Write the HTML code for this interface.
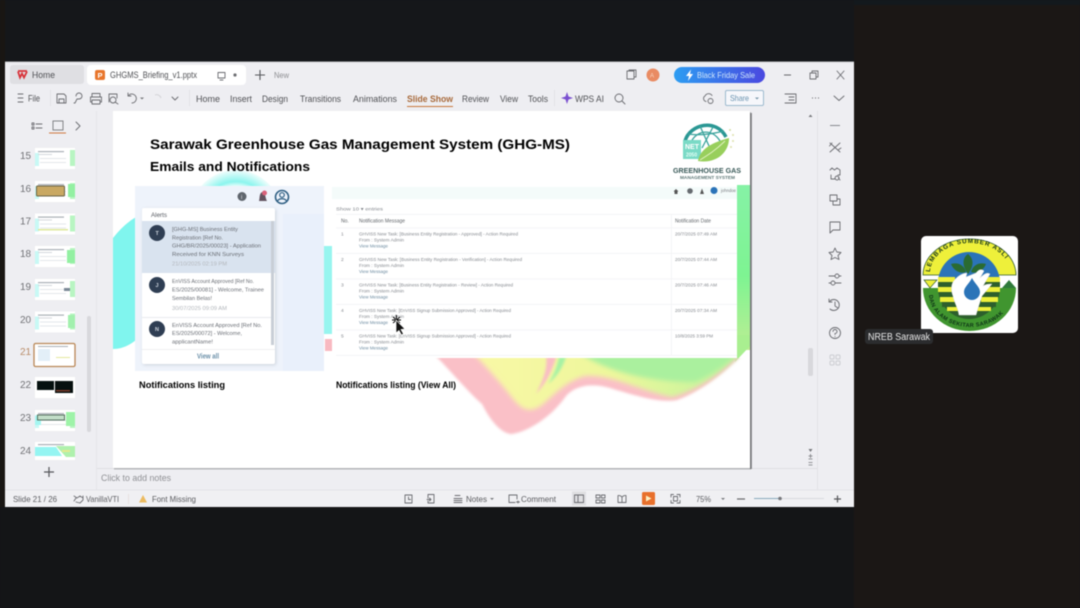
<!DOCTYPE html>
<html lang="en"><head><meta charset="utf-8"><title>GHGMS Briefing</title>
<style>
html,body{margin:0;padding:0;background:#15171a;width:1080px;height:608px;overflow:hidden}
svg{display:block;filter:blur(.45px)}
text{font-family:"Liberation Sans",sans-serif}
.m{font-size:9px;fill:#505155}
.s{font-size:8.5px;fill:#5c5d61}
.i{fill:none;stroke:#6a6b70;stroke-width:.9;stroke-linecap:round;stroke-linejoin:round}
.n{font-size:10px;fill:#707175}
.a{font-size:5.7px;fill:#6b6f76}
.d{font-size:5.4px;fill:#b3b7bc}
.t{font-size:4.9px;fill:#85898f}
.l{font-size:4.9px;fill:#6c8ba0}
.b{font-weight:bold;fill:#000}
</style></head><body>
<svg width="1080" height="608" viewBox="0 0 1080 608" xmlns="http://www.w3.org/2000/svg">
<defs>
<linearGradient id="gr" x1="0" x2="0" y1="0" y2="1"><stop offset="0" stop-color="#86f2a6"/><stop offset=".55" stop-color="#7ef492"/><stop offset="1" stop-color="#bdee94"/></linearGradient>
<linearGradient id="bt" x1="0" x2="1"><stop offset="0" stop-color="#2d9df2"/><stop offset="1" stop-color="#4a48e0"/></linearGradient>
<linearGradient id="wv" x1="0" x2="1"><stop offset="0" stop-color="#f9f8a6"/><stop offset=".5" stop-color="#eef79c"/><stop offset="1" stop-color="#bcf39c"/></linearGradient>
<radialGradient id="hal"><stop offset="0" stop-color="#fff"/><stop offset=".62" stop-color="#fff"/><stop offset=".75" stop-color="#8cf5ee"/><stop offset="1" stop-color="#f0fdfc"/></radialGradient>
<filter id="bl"><feGaussianBlur stdDeviation="2.500"/></filter>
<filter id="bm"><feGaussianBlur stdDeviation="1.200"/></filter>
<filter id="sh" x="-10%" y="-10%" width="120%" height="120%"><feGaussianBlur stdDeviation="1.600"/></filter>
<clipPath id="wc"><rect x="113" y="358" width="637" height="110"/></clipPath>
<path id="arcT" d="M9,37 A40,30 0 0 1 89,37"/>
<path id="arcB" d="M8,58 A41,33 0 0 0 90,58"/>
<g id="th">
<rect width="40" height="21" fill="#fff"/>
<rect x="0" y="5" width="4" height="13" fill="#c8f9f5"/>
<rect x="35" y="2" width="5" height="16" fill="#b8f5c2"/>
<rect x="3" y="3" width="26" height="1.200" fill="#aab0b6"/>
<rect x="3" y="6" width="14" height="1" fill="#d4d8dc"/>
<rect x="5" y="10" width="26" height="1" fill="#e4e7ea"/>
<rect x="5" y="14" width="26" height="1" fill="#e4e7ea"/>
</g>
</defs>

<rect width="1080" height="608" fill="#15171a"/>
<rect x="854" y="5" width="226" height="603" fill="#1b1715"/>
<rect x="854" y="0" width="226" height="5" fill="#13191d"/>
<rect x="0" y="0" width="5" height="608" fill="#191613"/>
<rect y="507" width="854" height="101" fill="#141517"/>

<!-- window -->
<rect x="5" y="62" width="849" height="445" fill="#eeeef2"/>
<rect x="5" y="61.500" width="849" height="1" fill="#c9cacd"/>
<rect x="5" y="490" width="849" height="17" fill="#f0f0f3"/>
<rect x="96" y="111" width="1" height="379" fill="#e6e6ea"/>
<rect x="817" y="111" width="1" height="379" fill="#e2e2e6"/>
<rect x="97" y="468" width="720" height="1" fill="#dedee2"/>
<rect x="5" y="489.500" width="849" height="1" fill="#e3e3e7"/>

<!-- tabs -->
<rect x="10" y="65" width="74" height="19" rx="3" fill="#dfdfe3"/>
<rect x="87" y="65" width="159" height="20" rx="4" fill="#fff"/>
<path d="M18,71.500 L20,77.500 L22,73.500 L24,77.500 L27,71.500 M18,71 H27" fill="none" stroke="#d8333a" stroke-width="1.800"/>
<text x="32" y="78" class="m" textLength="23" lengthAdjust="spacingAndGlyphs">Home</text>
<rect x="95" y="70" width="10" height="10" rx="2" fill="#e8762c"/>
<text x="97.500" y="78" font-size="7.500" fill="#fff" font-weight="bold">P</text>
<text x="110" y="78" class="m" textLength="87" lengthAdjust="spacingAndGlyphs">GHGMS_Briefing_v1.pptx</text>
<path class="i" d="M218,72.500 H225 V78 H218 Z M220,80 H223"/>
<circle cx="235" cy="75" r="1.600" fill="#6d6e72"/>
<path d="M260,70 V80 M255,75 H265" stroke="#55565a" stroke-width="1.100"/>
<text x="274" y="78" font-size="8" fill="#8d8e92" textLength="15" lengthAdjust="spacingAndGlyphs">New</text>

<!-- top right -->
<path class="i" d="M627,71 H634 V79 H627 Z M629,71 V70 H636 V77 H634"/>
<circle cx="653" cy="75" r="6.500" fill="#e98b63"/>
<text x="650" y="77.500" font-size="6" fill="#f8d4c0">A</text>
<rect x="674" y="67" width="91" height="16" rx="8" fill="url(#bt)"/>
<path d="M691,69.500 L686,76 H689 L688,81 L693,74 H690 Z" fill="#fff"/>
<text x="697" y="78" font-size="8.500" fill="#cfe6fb" textLength="58" lengthAdjust="spacingAndGlyphs">Black Friday Sale</text>
<path d="M784,75 H791" stroke="#66676b" stroke-width="1"/>
<path class="i" d="M810,73 H816 V79 H810 Z M812,73 V71 H818 V77 H816"/>
<path class="i" d="M837,71 L844,79 M844,71 L837,79"/>

<!-- ribbon row -->
<path class="i" d="M18,94 H23 M18,98 H23 M18,102 H23"/>
<text x="28" y="101.500" class="m" textLength="12" lengthAdjust="spacingAndGlyphs">File</text>
<rect x="50" y="90" width="1" height="16" fill="#e2e2e6"/>
<path class="i" d="M57,94 H64 L66,96 V103 H57 Z M59,103 V99 H64 V103"/>
<path class="i" d="M76,96 A3,3 0 1 1 79,99 H77 L75,103 H74"/>
<path class="i" d="M92,97 V93.500 H100 V97 M92,102 H90.500 V97 H101.500 V102 H100 M92,100 H100 V104 H92 Z"/>
<path class="i" d="M109,102 V94 H117 V98 M113,103 A3,3 0 1 0 113,97 A3,3 0 1 0 113,103 M115,102 L118,104"/>
<path class="i" d="M129,95 A4.500,4.500 0 1 1 132,103 M128,93 V96 H131"/>
<path d="M140,97.500 L142,99.500 L144,97.500 Z" fill="#77787c"/>
<path d="M155,95 A4.500,4.500 0 0 1 161,98" fill="none" stroke="#d4d4d8"/>
<path class="i" d="M172,97 L175,100 L178,97"/>
<rect x="189" y="90" width="1" height="16" fill="#e2e2e6"/>
<text x="196" y="102" class="m" textLength="24" lengthAdjust="spacingAndGlyphs">Home</text>
<text x="230" y="102" class="m" textLength="22" lengthAdjust="spacingAndGlyphs">Insert</text>
<text x="262" y="102" class="m" textLength="26" lengthAdjust="spacingAndGlyphs">Design</text>
<text x="300" y="102" class="m" textLength="41" lengthAdjust="spacingAndGlyphs">Transitions</text>
<text x="353" y="102" class="m" textLength="44" lengthAdjust="spacingAndGlyphs">Animations</text>
<text x="407" y="102" font-size="9" font-weight="bold" fill="#a86a3c" textLength="46" lengthAdjust="spacingAndGlyphs">Slide Show</text>
<rect x="407" y="106" width="46" height="1" fill="#c9773c"/>
<text x="462" y="102" class="m" textLength="27" lengthAdjust="spacingAndGlyphs">Review</text>
<text x="500" y="102" class="m" textLength="18" lengthAdjust="spacingAndGlyphs">View</text>
<text x="528" y="102" class="m" textLength="20" lengthAdjust="spacingAndGlyphs">Tools</text>
<rect x="554" y="90" width="1" height="16" fill="#e2e2e6"/>
<path d="M567,92 L568.500,96.500 L573,98 L568.500,99.500 L567,104 L565.500,99.500 L561,98 L565.500,96.500 Z" fill="#7a4fd0"/>
<text x="575" y="102" class="m" textLength="29" lengthAdjust="spacingAndGlyphs">WPS AI</text>
<path class="i" d="M622,101 L625,104 M619,102 A4,4 0 1 0 619,94 A4,4 0 1 0 619,102"/>
<path class="i" d="M706,101.500 A3,3 0 0 1 705,96 A4,4 0 0 1 712,95.500 M708,101 A2.500,2.500 0 1 0 713,101 A2.500,2.500 0 1 0 708,101"/>
<rect x="725.500" y="90.500" width="38" height="15" rx="1.500" fill="#f6f7fb" stroke="#9dbace"/>
<text x="730" y="101" font-size="8.500" fill="#6a93b0" textLength="19" lengthAdjust="spacingAndGlyphs">Share</text>
<path d="M755,97.500 L757,99.500 L759,97.500 Z" fill="#7a97aa"/>
<path class="i" d="M787,94 H796 V103 H787 M785,94 H788 M785,103 H788 M789,97 H794 M789,100 H794"/>
<path d="M812,98 h1 m2,0 h1 m2,0 h1" stroke="#66676b" stroke-width="1"/>
<path class="i" d="M834,96 L839,100.500 L844,96" stroke="#8a8b90"/>

<!-- left panel head -->
<path class="i" d="M32,123 H34 V125 H32 Z M32,127 H34 V129 H32 Z M36,124 H42 M36,128 H42" stroke="#9a9ba0"/>
<rect x="53" y="121" width="10" height="9" fill="none" stroke="#77787c" stroke-width=".9"/>
<rect x="49" y="132.500" width="17" height="1" fill="#cf7a40"/>
<path class="i" d="M76,122 L80,126 L76,130"/>

<!-- thumbnails -->
<text x="20" y="159" class="n">15</text>
<text x="20" y="192" class="n">16</text>
<text x="20" y="224.500" class="n">17</text>
<text x="20" y="257" class="n">18</text>
<text x="20" y="290" class="n">19</text>
<text x="20" y="323" class="n">20</text>
<text x="20" y="355" font-size="10" fill="#b98c68">21</text>
<text x="20" y="388" class="n">22</text>
<text x="20" y="421" class="n">23</text>
<text x="20" y="454" class="n">24</text>
<use href="#th" x="35" y="148"/>
<use href="#th" x="35" y="181"/>
<rect x="36.500" y="186" width="28" height="10" rx="1" fill="#c9a862" stroke="#6a6446"/>
<rect x="68" y="184" width="7" height="13" fill="#93f0a2"/>
<use href="#th" x="35" y="213.500"/>
<rect x="38" y="229" width="30" height="1.500" fill="#dfe89c"/>
<use href="#th" x="35" y="246"/>
<rect x="67" y="250" width="8" height="13" fill="#93f0a2"/>
<use href="#th" x="35" y="279"/>
<rect x="64" y="288" width="6" height="3" fill="#7a8896"/>
<use href="#th" x="35" y="311.500"/>
<rect x="68" y="315" width="7" height="13" fill="#a2f0ae"/>
<rect x="34" y="343.500" width="41" height="23" rx="1.500" fill="#fff" stroke="#b98655" stroke-width="1.300"/>
<rect x="38" y="349" width="12" height="12" fill="#e3eff8"/>
<rect x="38" y="346" width="30" height="1" fill="#aab0b6"/>
<rect x="56" y="357" width="14" height="1" fill="#e4e89d"/>
<rect x="35" y="377" width="40" height="21" fill="#fff"/>
<rect x="37" y="381" width="17" height="9" fill="#05100f"/>
<rect x="55" y="381" width="18" height="12" fill="#07100f"/>
<rect x="56" y="390" width="14" height="1.500" fill="#7a3a2a"/>
<use href="#th" x="35" y="410"/>
<rect x="35" y="416" width="6" height="9" fill="#a4f6f1"/>
<rect x="37.500" y="415" width="27" height="5" fill="#c2dec8" stroke="#55705f"/>
<rect x="66" y="412" width="9" height="14" fill="#9ef3a8"/>
<rect x="35" y="442" width="40" height="18" fill="#fff"/>
<path d="M35,447 H56 L62,456 H35 Z" fill="#95f5f2"/>
<path d="M56,446 H75 V457 H66 Z" fill="#aff1ad"/>
<rect x="38" y="444" width="26" height="1.200" fill="#aab0b6"/>
<path d="M62,451 H70" stroke="#e6e98f" stroke-width="2"/>
<rect x="87" y="316" width="4" height="116" rx="2" fill="#d8d8dc"/>
<path d="M49,467 V477 M44,472 H54" stroke="#55565b" stroke-width="1.200"/>

<!-- slide shadow + slide -->
<rect x="114" y="112" width="637" height="357.500" fill="#b4b5b8"/>
<rect x="750" y="113" width="1.800" height="356" fill="#77787b"/>
<rect x="113" y="111" width="637" height="357" fill="#fff"/>

<!-- slide decoration -->
<circle cx="236" cy="216" r="46" fill="url(#hal)"/>
<path d="M113,238 Q124,224 136,217 L136,340 Q125,349 113,349 Z" fill="#80f5ee"/>
<rect x="324" y="246" width="9" height="88" fill="#97f5ef"/>
<rect x="325" y="339" width="8" height="12" fill="#f8b9c1"/>
<rect x="735" y="185" width="15" height="165" fill="url(#gr)"/>
<path d="M735,335 H750 V346 L735,362 Z" fill="#a9ef90"/>
<g clip-path="url(#wc)">
<path d="M430,350 C450,370 468,392 482,404 C492,424 503,434 512,434 C530,431 552,416 566,396 C576,385 592,383 610,388 C640,397 660,403 677,400 C700,392 730,370 750,345 V340 H430 Z" fill="#fac0c7" filter="url(#bm)"/>
<path d="M470,350 C488,368 503,386 514,400 C524,412 532,412 542,405 C554,395 566,381 585,376 C612,374 640,391 672,397 C700,390 730,367 750,343 V340 H470 Z" fill="url(#wv)" filter="url(#bl)"/>
<path d="M545,350 C549,366 544,378 536,394 C547,382 554,368 558,350 Z" fill="#f9bdc5" filter="url(#bm)"/>
<path d="M560,350 C558,366 554,374 548,384 C558,376 564,366 568,350 Z" fill="#a6f2a4" filter="url(#bm)"/>
<path d="M575,350 C605,372 650,382 695,382 C715,374 735,358 750,340 H575 Z" fill="#aaf09e" filter="url(#bl)"/>
</g>

<!-- title -->
<text x="150" y="149" font-size="14" class="b" textLength="420" lengthAdjust="spacingAndGlyphs">Sarawak Greenhouse Gas Management System (GHG-MS)</text>
<text x="150" y="171" font-size="13" class="b" textLength="160" lengthAdjust="spacingAndGlyphs">Emails and Notifications</text>

<!-- ghg logo -->
<path d="M685,141 C690,124 716,118 726,137" fill="none" stroke="#2a9794" stroke-width="3.500"/>
<path d="M691,142 C697,130 712,128 720,141 M700,126 L709,146 M713,127 L702,148 M688,134 C700,136 712,134 724,131" fill="none" stroke="#3aa39c" stroke-width="1.300"/>
<rect x="683" y="140" width="18" height="19" fill="#7adac6"/>
<text x="685" y="149" font-size="7" font-weight="bold" fill="#fff">NET</text>
<text x="686" y="156.500" font-size="5" font-weight="bold" fill="#e4fff6">2050</text>
<path d="M698,161 C700,148 714,142 729,138 C729,152 717,164 698,161 Z" fill="#98cf5c"/>
<path d="M700,160 C708,155 716,150 725,141" stroke="#e0f2c0" fill="none"/>
<circle cx="730" cy="130" r="1" fill="#d2dda2"/><circle cx="733" cy="135" r="1" fill="#dfe2ac"/><circle cx="733" cy="141" r="1" fill="#dfe2ac"/><circle cx="731" cy="147" r="1" fill="#dfe2ac"/>
<text x="673" y="173" font-size="7.500" font-weight="bold" fill="#3a5a59" textLength="68" lengthAdjust="spacingAndGlyphs">GREENHOUSE GAS</text>
<text x="680" y="179" font-size="4.500" font-weight="bold" fill="#5c7675" textLength="55" lengthAdjust="spacingAndGlyphs">MANAGEMENT SYSTEM</text>

<!-- alerts panel -->
<rect x="135" y="186" width="189" height="185" fill="#eef3fb"/>
<rect x="283" y="214" width="41" height="157" fill="#e9f0fb"/>
<circle cx="242" cy="196.500" r="4.500" fill="#5f656d"/>
<text x="241" y="199" font-size="6" fill="#dfe2e6">i</text>
<path d="M259,201 C260,198 259,193 262.500,192 C266,193 265,198 267,201 Z" fill="#62525f"/>
<circle cx="264.500" cy="193" r="2.500" fill="#d9607a"/>
<circle cx="282" cy="197" r="6.500" fill="#eef3fb" stroke="#2f5f83" stroke-width="1.600"/>
<circle cx="282" cy="195" r="2.300" fill="none" stroke="#2f5f83" stroke-width="1.200"/>
<path d="M277.500,201 C279,198 285,198 286.500,201" fill="none" stroke="#2f5f83" stroke-width="1.200"/>
<rect x="143" y="209" width="133" height="156" rx="2" fill="#aab2bb" opacity=".5" filter="url(#sh)"/>
<rect x="142" y="208" width="133" height="156" rx="2" fill="#fff"/>
<text x="151" y="217" font-size="6" fill="#565a61" textLength="16" lengthAdjust="spacingAndGlyphs">Alerts</text>
<rect x="142" y="221" width="133" height="52" fill="#d9e3ef"/>
<rect x="271" y="221" width="3" height="124" fill="#c8ced6"/>
<rect x="142" y="317" width="129" height="1" fill="#e8eaee"/>
<rect x="142" y="349" width="133" height="1" fill="#eff0f2"/>
<circle cx="157" cy="233" r="8" fill="#2f3e53"/>
<circle cx="157" cy="285" r="8" fill="#2f3e53"/>
<circle cx="157" cy="329" r="8" fill="#2f3e53"/>
<text x="155.500" y="235" font-size="5.500" font-weight="bold" fill="#cdd4dd">T</text>
<text x="155.500" y="287" font-size="5.500" font-weight="bold" fill="#cdd4dd">J</text>
<text x="155" y="331" font-size="5.500" font-weight="bold" fill="#cdd4dd">N</text>
<text x="172" y="231" class="a" textLength="66" lengthAdjust="spacingAndGlyphs">[GHG-MS] Business Entity</text>
<text x="172" y="239.500" class="a" textLength="51" lengthAdjust="spacingAndGlyphs">Registration [Ref No.</text>
<text x="172" y="247.500" class="a" textLength="89" lengthAdjust="spacingAndGlyphs">GHG/BR/2025/00023] - Application</text>
<text x="172" y="256" class="a" textLength="72" lengthAdjust="spacingAndGlyphs">Received for KNN Surveys</text>
<text x="172" y="265.500" class="d" textLength="55" lengthAdjust="spacingAndGlyphs">21/10/2025 02:19 PM</text>
<text x="172" y="283" class="a" textLength="82" lengthAdjust="spacingAndGlyphs">EnVISS Account Approved [Ref No.</text>
<text x="172" y="291.500" class="a" textLength="92" lengthAdjust="spacingAndGlyphs">ES/2025/00081] - Welcome, Trainee</text>
<text x="172" y="300" class="a" textLength="40" lengthAdjust="spacingAndGlyphs">Sembilan Belas!</text>
<text x="172" y="310" class="d" textLength="55" lengthAdjust="spacingAndGlyphs">30/07/2025 09:09 AM</text>
<text x="172" y="327" class="a" textLength="90" lengthAdjust="spacingAndGlyphs">EnVISS Account Approved [Ref No.</text>
<text x="172" y="335" class="a" textLength="70" lengthAdjust="spacingAndGlyphs">ES/2025/00072] - Welcome,</text>
<text x="172" y="343.500" class="a" textLength="41" lengthAdjust="spacingAndGlyphs">applicantName!</text>
<text x="197" y="358.500" font-size="7" font-weight="bold" fill="#6a8fa8" textLength="22" lengthAdjust="spacingAndGlyphs">View all</text>
<text x="139" y="388" font-size="9" class="b" textLength="86" lengthAdjust="spacingAndGlyphs">Notifications listing</text>

<!-- table panel -->
<rect x="332" y="185" width="405" height="173" fill="#fff"/>
<rect x="332" y="187" width="405" height="12" fill="#f4fbfa"/>
<path d="M676,189 L673.500,191.500 H674.500 V194 H677.500 V191.500 H678.500 Z" fill="#555"/>
<circle cx="690" cy="191" r="2.800" fill="#666b70"/>
<path d="M700,194 L702,188.500 L704,194 Z" fill="#555"/>
<circle cx="714" cy="190.500" r="3.500" fill="#2b73b8"/>
<text x="721" y="192" font-size="4.500" fill="#777a7f" textLength="15" lengthAdjust="spacingAndGlyphs">johndoe</text>
<text x="336" y="210.500" class="t" textLength="47" lengthAdjust="spacingAndGlyphs">Show  10  ▾  entries</text>
<g fill="#f0f1f3">
<rect x="336" y="214" width="401" height=".7"/><rect x="336" y="227.500" width="401" height=".7"/>
<rect x="336" y="253" width="401" height=".7"/><rect x="336" y="278.500" width="401" height=".7"/>
<rect x="336" y="304" width="401" height=".7"/><rect x="336" y="329.500" width="401" height=".7"/>
<rect x="336" y="355" width="401" height=".7"/>
<rect x="671" y="214" width=".7" height="141"/>
</g>
<text x="341" y="222.500" font-size="5" fill="#62666b">No.</text>
<text x="359" y="222.500" font-size="5" fill="#62666b" textLength="46" lengthAdjust="spacingAndGlyphs">Notification Message</text>
<text x="675" y="222.500" font-size="5" fill="#62666b" textLength="36" lengthAdjust="spacingAndGlyphs">Notification Date</text>

<text x="341" y="235.500" class="t">1</text>
<text x="359" y="235.500" class="t" textLength="159" lengthAdjust="spacingAndGlyphs">GHVISS New Task: [Business Entity Registration - Approved] - Action Required</text>
<text x="359" y="241.500" class="t" textLength="45" lengthAdjust="spacingAndGlyphs">From : System Admin</text>
<text x="359" y="247.500" class="l" textLength="29" lengthAdjust="spacingAndGlyphs">View Message</text>
<text x="675" y="235.500" class="t" textLength="42" lengthAdjust="spacingAndGlyphs">20/7/2025 07:49 AM</text>

<text x="341" y="261" class="t">2</text>
<text x="359" y="261" class="t" textLength="163" lengthAdjust="spacingAndGlyphs">GHVISS New Task: [Business Entity Registration - Verification] - Action Required</text>
<text x="359" y="267" class="t" textLength="45" lengthAdjust="spacingAndGlyphs">From : System Admin</text>
<text x="359" y="273" class="l" textLength="29" lengthAdjust="spacingAndGlyphs">View Message</text>
<text x="675" y="261" class="t" textLength="42" lengthAdjust="spacingAndGlyphs">20/7/2025 07:44 AM</text>

<text x="341" y="286.500" class="t">3</text>
<text x="359" y="286.500" class="t" textLength="154" lengthAdjust="spacingAndGlyphs">GHVISS New Task: [Business Entity Registration - Review] - Action Required</text>
<text x="359" y="292.500" class="t" textLength="45" lengthAdjust="spacingAndGlyphs">From : System Admin</text>
<text x="359" y="298.500" class="l" textLength="29" lengthAdjust="spacingAndGlyphs">View Message</text>
<text x="675" y="286.500" class="t" textLength="42" lengthAdjust="spacingAndGlyphs">20/7/2025 07:46 AM</text>

<text x="341" y="312" class="t">4</text>
<text x="359" y="312" class="t" textLength="152" lengthAdjust="spacingAndGlyphs">GHVISS New Task: [EnVISS Signup Submission Approved] - Action Required</text>
<text x="359" y="318" class="t" textLength="45" lengthAdjust="spacingAndGlyphs">From : System Admin</text>
<text x="359" y="324" class="l" textLength="29" lengthAdjust="spacingAndGlyphs">View Message</text>
<text x="675" y="312" class="t" textLength="42" lengthAdjust="spacingAndGlyphs">20/7/2025 07:34 AM</text>

<text x="341" y="337.500" class="t">5</text>
<text x="359" y="337.500" class="t" textLength="152" lengthAdjust="spacingAndGlyphs">GHVISS New Task: [EnVISS Signup Submission Approved] - Action Required</text>
<text x="359" y="343.500" class="t" textLength="45" lengthAdjust="spacingAndGlyphs">From : System Admin</text>
<text x="359" y="349.500" class="l" textLength="29" lengthAdjust="spacingAndGlyphs">View Message</text>
<text x="675" y="337.500" class="t" textLength="38" lengthAdjust="spacingAndGlyphs">10/8/2025 3:59 PM</text>

<text x="336" y="388" font-size="9" class="b" textLength="120" lengthAdjust="spacingAndGlyphs">Notifications listing (View All)</text>

<!-- cursor -->
<path d="M396.500,315 V325 M392,320 H401 M393,317 L400,323 M400,317 L393,323" stroke="#000" stroke-width=".9"/>
<path d="M396,320 V333 L399,330.500 L401.500,335 L403.500,334 L401,329.500 L405,329 Z" fill="#111" stroke="#fff" stroke-width=".7"/>

<!-- gutter scrollbar -->
<path d="M808.500,117 L810.500,114.500 L812.500,117 Z" fill="#77787c"/>
<rect x="808" y="348" width="5" height="28" rx="2" fill="#d8d8dc"/>
<path d="M808.500,449 H812.500 L810.500,452 Z" fill="#77787c"/>
<path d="M808.500,456 H812.500 M808.500,459 H812.500 M810.500,454 V458" stroke="#77787c" stroke-width=".8"/>
<path d="M808.500,462.500 H812.500 M808.500,465 H812.500" stroke="#77787c" stroke-width=".8"/>

<!-- right rail -->
<path d="M830,125.500 H840" stroke="#88898e" stroke-width="1"/>
<path class="i" d="M830,143 L840,152 M840,143 L830,152 M829.500,146 L832,143 M838,150 L841,148"/>
<path class="i" d="M830,170 L832,168 L834.500,170 L837,168 L840,170 V175 H838 M831,175 V179 H835 M837,176 A2,2 0 1 0 837.100,176 M838.500,178 L840,180"/>
<path class="i" d="M830,195 H837 V201 H830 Z M833,201 V205 H840 V199 H837"/>
<path class="i" d="M830,222 H840 V230 H833 L830,233 Z"/>
<path class="i" d="M835,248 L836.800,252 L841,252.500 L838,255.500 L839,259.500 L835,257.500 L831,259.500 L832,255.500 L829,252.500 L833.200,252 Z"/>
<path class="i" d="M829,276 H835 M839,276 H841 M829,283 H831 M835,283 H841 M835,276 A2,2 0 1 0 839,276 A2,2 0 1 0 835,276 M831,283 A2,2 0 1 0 835,283 A2,2 0 1 0 831,283"/>
<path class="i" d="M830,301 A5.500,5.500 0 1 1 830,309 M829,299 V302 H832 M835,302 V306 L838,308"/>
<circle class="i" cx="835" cy="333" r="5.500"/>
<path class="i" d="M833,331.500 A2,2 0 1 1 835,333.500 V334.500 M835,336.500 V336.600"/>
<g fill="none" stroke="#cccdd2"><rect x="830" y="355" width="4" height="4" rx="1"/><rect x="836" y="355" width="4" height="4" rx="1"/><rect x="830" y="361" width="4" height="4" rx="1"/><rect x="836" y="361" width="4" height="4" rx="1"/></g>

<!-- notes -->
<text x="101" y="481" font-size="9" fill="#909195" textLength="70" lengthAdjust="spacingAndGlyphs">Click to add notes</text>

<!-- status bar -->
<text x="13" y="502" class="s" textLength="44" lengthAdjust="spacingAndGlyphs">Slide 21 / 26</text>
<path class="i" d="M74,496 L77,498 L80,496 L83,498 M74,501 L76,498 M83,496 V500 L80,503 L76,502"/>
<text x="86" y="502" class="s" textLength="33" lengthAdjust="spacingAndGlyphs">VanillaVTI</text>
<rect x="128" y="494" width="1" height="10" fill="#e8e0e0"/>
<path d="M143,495 L147,502.500 H139 Z" fill="#ecbb60"/>
<text x="152" y="502" class="s" textLength="44" lengthAdjust="spacingAndGlyphs">Font Missing</text>
<path class="i" d="M405,495 H412 V503 H405 Z M408.500,497 V499.500 H410.500"/>
<path class="i" d="M428,498 V494.500 H434 V503 H428 V501 M427,499.500 H431 M429.500,498 L431,499.500 L429.500,501"/>
<path class="i" d="M455,495.500 H460 M454,498.500 H462 M454,500.500 H462 M454,502.500 H462"/>
<text x="466" y="502" class="s" textLength="21" lengthAdjust="spacingAndGlyphs">Notes</text>
<path d="M490,498 L492,500 L494,498 Z" fill="#77787c"/>
<path class="i" d="M515,502.500 H509 V495 H517 V499 M518,501 V503 M516.500,502 H519.500"/>
<text x="521" y="502" class="s" textLength="35" lengthAdjust="spacingAndGlyphs">Comment</text>
<rect x="572" y="491.500" width="14" height="14" fill="#dfdfe2"/>
<path class="i" d="M574.500,495 H583.500 V502.500 H574.500 Z M578,495 V502.500"/>
<path class="i" d="M596,495 H600 V498 H596 Z M601.500,495 H605 V498 H601.500 Z M596,500 H600 V503 H596 Z M601.500,500 H605 V503 H601.500 Z"/>
<path class="i" d="M618,495.500 C620,495 621,496 622,497 C623,496 624,495 626,495.500 V502.500 H618 Z M622,497 V502.500"/>
<rect x="642" y="492" width="13" height="13" rx="1.500" fill="#e8702c"/>
<path d="M646,495.500 L651.500,498.500 L646,501.500 Z" fill="#fdf1c4"/>
<path class="i" d="M671,497 V494.500 H673.500 M677,494.500 H680 V497 M680,500.500 V503 H677 M673.500,503 H671 V500.500 M673.500,496.500 H677.500 V501 H673.500 Z"/>
<text x="696" y="502" class="s" textLength="15" lengthAdjust="spacingAndGlyphs">75%</text>
<path d="M721,498 L723,500 L725,498 Z" fill="#77787c"/>
<path d="M737,499 H745" stroke="#66676b" stroke-width="1.200"/>
<rect x="754" y="498" width="70" height="1" fill="#d8d9de"/>
<rect x="754" y="498" width="26" height="1" fill="#8aaabd"/>
<circle cx="780" cy="498.500" r="1.800" fill="#77787c"/>
<path d="M834,499 H841 M837.500,495.500 V502.500" stroke="#55565a" stroke-width="1.200"/>

<!-- participant tile -->
<g transform="translate(921,236)">
<rect width="97" height="97" rx="5" fill="#fff"/>
<path d="M2,39 A46.500,36 0 0 1 95,39 Z" fill="#eef03a" stroke="#2f5a2a" stroke-width=".8"/>
<circle cx="48" cy="47" r="31" fill="#2b74b8"/>
<path d="M2,52 H95 A46.500,43 0 0 1 2,52 Z" fill="#40952f"/>
<path d="M17,52 A31,31 0 0 0 79,52 Z" fill="#2d5f2c"/>
<g fill="#eef03a">
<rect x="17" y="41" width="17" height="5"/>
<rect x="17" y="51" width="17" height="5"/><rect x="19" y="61" width="17" height="5"/><rect x="26" y="71" width="15" height="4"/>
<rect x="62" y="41" width="17" height="5"/><rect x="62" y="51" width="17" height="5"/><rect x="60" y="61" width="17" height="5"/><rect x="55" y="71" width="15" height="4"/>
</g>
<g fill="#2d5f2c">
<rect x="17" y="46" width="17" height="5"/><rect x="18" y="56" width="18" height="5"/><rect x="21" y="66" width="18" height="5"/>
<rect x="62" y="46" width="17" height="5"/><rect x="60" y="56" width="18" height="5"/><rect x="57" y="66" width="18" height="5"/>
</g>
<path d="M3,44 L16,44 L9,52 Z" fill="#eef03a" stroke="#2f5a2a" stroke-width=".7"/>
<path d="M81,52 L88,44 L95,52 Z" fill="#2f7a3a"/>
<path d="M47,18 C41,22 41,30 47,38 C53,30 53,23 47,18 Z" fill="#2a6b31"/>
<path d="M30,28 C37,26 43,29 45,36 C39,38 33,35 30,28 Z M65,28 C58,26 52,29 50,36 C56,38 62,35 65,28 Z" fill="#2a6b31"/>
<path d="M32,46 C36,40 42,37 46,37 L45,41 L55,37 C58,33 61,33 63,35 L59,42 C63,38 66,36 69,38 L62,50 C65,48 68,48 71,48 L61,60 C59,66 57,72 55,79 H38 C37,72 33,66 32,60 C30,55 30,50 32,46 Z" fill="#fff" stroke="#dcdcdc" stroke-width=".5"/>
<path d="M51,42 C54,48 59,51 59,56 A8,8 0 0 1 43,56 C43,51 48,48 51,42 Z" fill="#2b74b8"/>
<text font-size="6.300" font-weight="bold" fill="#15351a"><textPath href="#arcT" startOffset="1%" textLength="94" lengthAdjust="spacing">LEMBAGA SUMBER ASLI</textPath></text>
<text font-size="5.600" font-weight="bold" fill="#0e3417"><textPath href="#arcB" startOffset="1%" textLength="94" lengthAdjust="spacing">DAN ALAM SEKITAR SARAWAK</textPath></text>
</g>
<rect x="865" y="329" width="68" height="15" rx="3" fill="#2b2c2e"/>
<text x="868" y="340" font-size="10" fill="#e9e9e9" textLength="62" lengthAdjust="spacingAndGlyphs">NREB Sarawak</text>
</svg>
</body></html>
